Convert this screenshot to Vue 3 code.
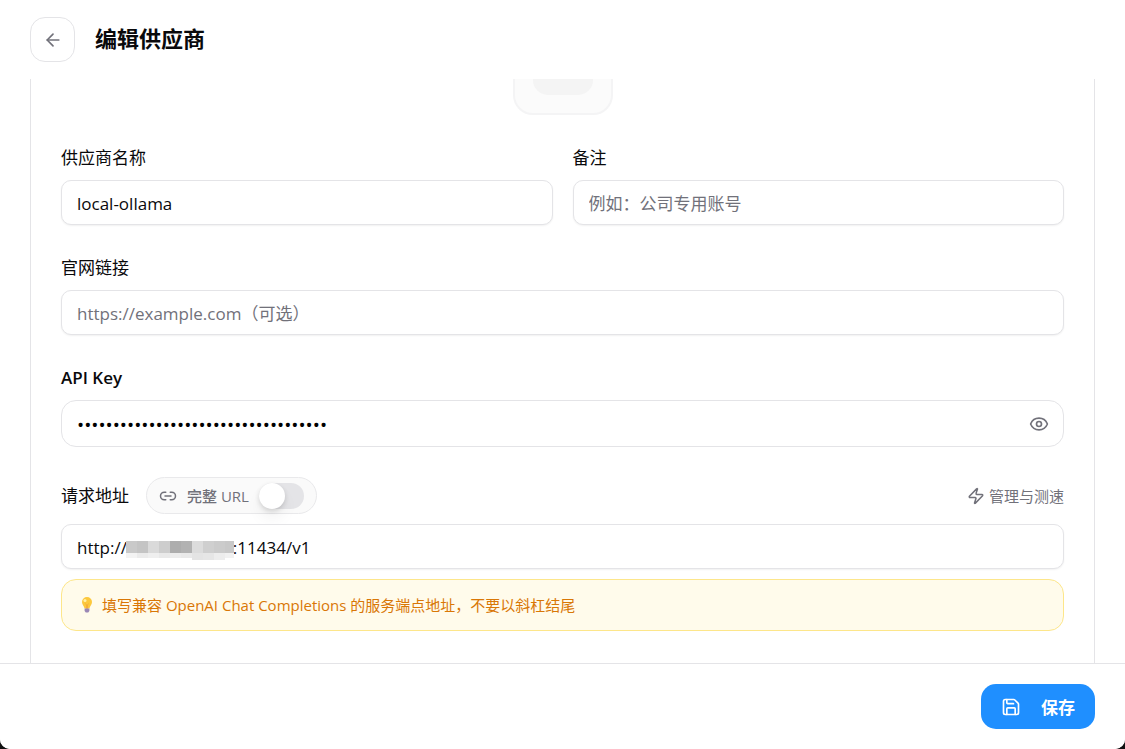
<script setup>
import { ref, onMounted } from 'vue';

const provider = ref({
  name: 'local-ollama',
  remark: '',
  website: '',
  apiKey: 'sk-local-ollama-0000000000000000000',
  baseUrl: 'http://' + '\u00a0'.repeat(24) + ':11434/v1',
});
const fullUrl = ref(false);
const showKey = ref(false);
const scroller = ref(null);

// host mask tiles
const maskTop = ['#c9c9c9', '#c4c4c4', '#dadada', '#cdcdcd', '#adadad', '#b2b2b2', '#dcdcdc', '#cfcfcf', '#cbcbcb', '#c8c8c8'];
const maskBottom = ['#f3f3f3', '#ebebeb', '#efefef', '#e9e9e9', '#ececec', '#e9e9e9', '#e4e4e4', '#e6e6e6', '#ededed', '#f1f1f1'];

onMounted(() => {
  scroller.value.scrollTop = 95;
});

function onSubmit() {
  console.log('save', provider.value);
}
</script>

<template>
  <div class="page">
    <header class="header">
      <button type="button" class="back" aria-label="返回">
        <svg class="icon" viewBox="0 0 24 24"><path d="m12 19-7-7 7-7" /><path d="M19 12H5" /></svg>
      </button>
      <h1>编辑供应商</h1>
    </header>

    <main ref="scroller" class="scroller">
      <form id="providerForm" class="card" @submit.prevent="onSubmit">
        <button type="button" class="logo" aria-label="图标"><span></span></button>

        <div class="columns">
          <div class="field">
            <label for="name">供应商名称</label>
            <input id="name" v-model="provider.name" class="control" type="text" />
          </div>
          <div class="field">
            <label for="remark">备注</label>
            <input id="remark" v-model="provider.remark" class="control" type="text" placeholder="例如：公司专用账号" />
          </div>
        </div>

        <div class="field">
          <label for="website">官网链接</label>
          <input id="website" v-model="provider.website" class="control" type="text" placeholder="https://example.com（可选）" />
        </div>

        <div class="field">
          <label for="apiKey" class="strong">API Key</label>
          <div class="key-box">
            <input id="apiKey" v-model="provider.apiKey" :type="showKey ? 'text' : 'password'" />
            <button type="button" class="plain" aria-label="显示" @click="showKey = !showKey">
              <svg class="icon" viewBox="0 0 24 24">
                <path d="M2.062 12.348a1 1 0 0 1 0-.696 10.75 10.75 0 0 1 19.876 0 1 1 0 0 1 0 .696 10.75 10.75 0 0 1-19.876 0" />
                <circle cx="12" cy="12" r="3" />
              </svg>
            </button>
          </div>
        </div>

        <div class="field">
          <div class="url-row">
            <label for="baseUrl">请求地址</label>
            <label class="pill">
              <svg class="icon" viewBox="0 0 24 24">
                <path d="M9 17H7A5 5 0 0 1 7 7h2" /><path d="M15 7h2a5 5 0 1 1 0 10h-2" /><path d="M8 12h8" />
              </svg>
              <span>完整 URL</span>
              <input v-model="fullUrl" type="checkbox" class="switch" />
            </label>
            <button type="button" class="plain speed">
              <svg class="icon" viewBox="0 0 24 24">
                <path d="M4 14a1 1 0 0 1-.78-1.63l9.9-10.2a.5.5 0 0 1 .86.46l-1.92 6.02A1 1 0 0 0 13 10h7a1 1 0 0 1 .78 1.63l-9.9 10.2a.5.5 0 0 1-.86-.46l1.92-6.02A1 1 0 0 0 11 14z" />
              </svg>
              管理与测速
            </button>
          </div>
          <div class="url-box">
            <input id="baseUrl" v-model="provider.baseUrl" class="control" type="text" />
            <svg class="mask" viewBox="0 0 108 20" aria-hidden="true">
              <rect v-for="(c, i) in maskBottom" :key="'b' + i" :x="i * 11" :y="13" width="11" :height="i > 5 && i < 9 ? 7 : 5" :fill="c" />
              <rect v-for="(c, i) in maskTop" :key="'t' + i" :x="i * 11" y="1" width="11" height="12" :fill="c" />
            </svg>
          </div>
          <div class="hint">
            <svg class="bulb" viewBox="0 0 16 18">
              <path d="M8 1a5 5 0 0 0-5 5c0 2.600 2 3.600 2.600 6.500h4.800C11 9.600 13 8.600 13 6a5 5 0 0 0-5-5z" fill="#fcc83d" />
              <path d="M6.500 7.500 7.500 9v3.500h1V9l1-1.500" fill="none" stroke="#f5ae3a" />
              <circle cx="6" cy="4.500" r="1.500" fill="#fff0a8" />
              <path d="M5.600 12.500h4.800v2.500l-1.200 1.500H6.800L5.600 15z" fill="#9a87b5" />
            </svg>
            <p>填写兼容 OpenAI Chat Completions 的服务端点地址，不要以斜杠结尾</p>
          </div>
        </div>
      </form>
    </main>

    <footer class="footer">
      <button type="submit" form="providerForm" class="save">
        <svg class="icon" viewBox="0 0 24 24">
          <path d="M15.200 3a2 2 0 0 1 1.400.6l3.800 3.800a2 2 0 0 1 .6 1.400V19a2 2 0 0 1-2 2H5a2 2 0 0 1-2-2V5a2 2 0 0 1 2-2z" />
          <path d="M17 21v-7a1 1 0 0 0-1-1H8a1 1 0 0 0-1 1v7" /><path d="M7 3v4a1 1 0 0 0 1 1h7" />
        </svg>
        保存
      </button>
    </footer>
  </div>
</template>

<style>
body {
  margin: 0;
  background: #111;
}
</style>

<style scoped>
* {
  box-sizing: border-box;
}
.page {
  display: flex;
  flex-direction: column;
  height: 100vh;
  overflow: hidden;
  background: #fff;
  border-radius: 0 0 10px 10px;
  color: #09090b;
  font-family: "Open Sans", "Noto Sans CJK SC", sans-serif;
  font-size: 17px;
}
button,
input {
  font: inherit;
  color: inherit;
}
button {
  cursor: pointer;
}
.icon {
  display: block;
  flex: none;
  width: 20px;
  height: 20px;
  fill: none;
  stroke: currentColor;
  stroke-width: 2;
  stroke-linecap: round;
  stroke-linejoin: round;
}
.header {
  display: flex;
  flex: none;
  align-items: flex-start;
  gap: 20px;
  padding: 17px 30px;
}
.back {
  display: grid;
  place-items: center;
  width: 45px;
  height: 45px;
  padding: 0;
  border: 1px solid #e4e4e7;
  border-radius: 15px;
  background: #fff;
  color: #71717a;
}
h1 {
  margin: 0;
  font-size: 22px;
  line-height: 42px;
  font-weight: 600;
}
.scroller {
  flex: 1;
  min-height: 0;
  padding: 0 30px 30px;
  overflow-y: auto;
  scrollbar-width: none;
}
.card {
  display: flex;
  flex-direction: column;
  gap: 30px;
  padding: 30px 30px 60px;
  border: 1px solid #e4e4e7;
  border-radius: 15px;
}
.logo {
  display: grid;
  place-items: center;
  align-self: center;
  width: 100px;
  height: 100px;
  padding: 0;
  border: 2px solid #f4f4f5;
  border-radius: 20px;
  background: #fbfbfb;
}
.logo span {
  width: 60px;
  height: 60px;
  border-radius: 15px;
  background: #f4f4f4;
}
.columns {
  display: grid;
  grid-template-columns: 1fr 1fr;
  gap: 20px;
}
.field {
  display: flex;
  flex-direction: column;
  gap: 10px;
  min-width: 0;
}
label {
  padding-top: 1px;
  line-height: 24px;
}
.strong {
  font-weight: 600;
}
.control {
  display: block;
  width: 100%;
  height: 45px;
  padding: 2px 15px 0;
  border: 1px solid #e4e4e7;
  border-radius: 10px;
  background: #fff;
  box-shadow: 0 1px 2px rgba(0, 0, 0, 0.06);
}
.control::placeholder {
  color: #71717a;
  opacity: 1;
}
.key-box {
  display: flex;
  align-items: center;
  height: 47px;
  padding: 0 14px 0 15px;
  border: 1px solid #e4e4e7;
  border-radius: 15px;
}
.key-box input {
  flex: 1;
  min-width: 0;
  padding: 2px 0 0;
  border: 0;
  outline: 0;
  background: none;
  font-size: 19px;
  color: #000;
}
.plain {
  padding: 0;
  border: 0;
  background: none;
  color: #71717a;
}
.url-row {
  display: flex;
  align-items: center;
  gap: 17px;
}
.pill {
  display: flex;
  align-items: center;
  gap: 10px;
  height: 37px;
  padding: 0 12px;
  border: 1px solid #e9e9eb;
  border-radius: 20px;
  background: #fafafa;
  color: #71717a;
  font-size: 15px;
  font-weight: 500;
}
.pill .icon,
.speed .icon {
  width: 18px;
  height: 18px;
}
.switch {
  appearance: none;
  display: flex;
  align-items: center;
  width: 45px;
  height: 26px;
  margin: 0;
  border-radius: 13px;
  background: #e4e4e7;
}
.switch::before {
  content: "";
  width: 26px;
  height: 26px;
  border-radius: 50%;
  background: #fff;
  box-shadow: 0 2px 5px rgba(0, 0, 0, 0.14), 0 10px 15px rgba(0, 0, 0, 0.05);
}
.switch:checked {
  justify-content: flex-end;
  background: #1f8fff;
}
.speed {
  display: flex;
  align-items: center;
  gap: 4px;
  margin-left: auto;
  font-size: 15px;
}
.url-box {
  position: relative;
}
.mask {
  position: absolute;
  top: 16px;
  left: 65px;
  width: 108px;
  height: 20px;
}
.hint {
  display: flex;
  align-items: center;
  gap: 7px;
  min-height: 52px;
  padding: 0 17px;
  border: 1px solid #fde68a;
  border-radius: 15px;
  background: #fffbeb;
  color: #d97706;
  font-size: 15px;
}
.hint p {
  margin: 0;
  padding-bottom: 2px;
}
.bulb {
  flex: none;
  width: 16px;
  height: 18px;
}
.footer {
  display: flex;
  flex: none;
  justify-content: flex-end;
  padding: 20px 30px;
  border-top: 1px solid #e4e4e7;
  background: #fff;
}
.save {
  display: flex;
  align-items: center;
  gap: 20px;
  height: 45px;
  padding: 0 20px;
  border: 0;
  border-radius: 15px;
  background: #1f8fff;
  color: #fff;
  font-weight: 600;
}
</style>
